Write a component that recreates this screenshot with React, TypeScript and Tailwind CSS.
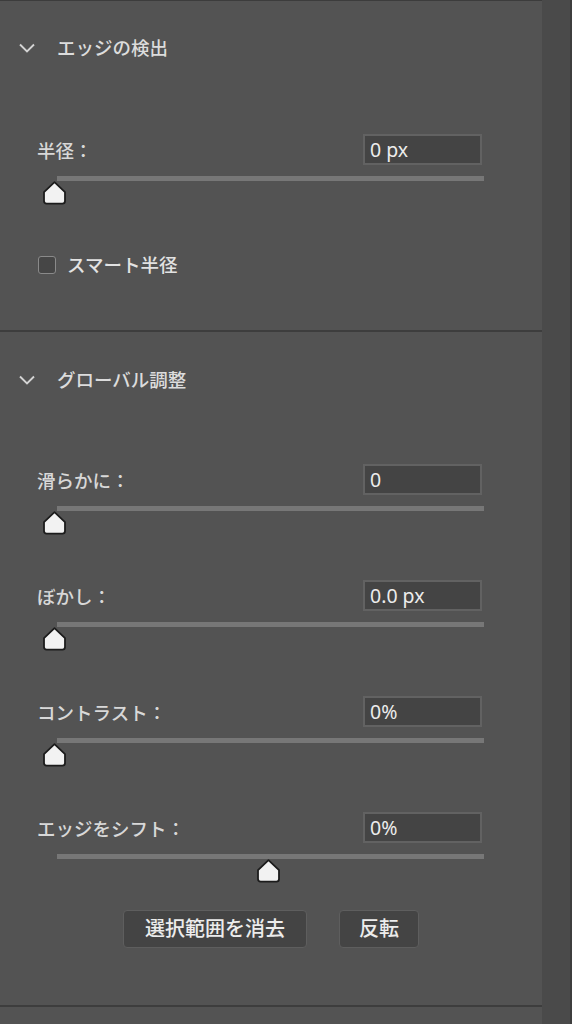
const FONT = 'font-["Noto_Sans","Noto_Sans_CJK_JP",sans-serif]';

function Thumb() {
  return (
    <svg width="25" height="24" viewBox="0 0 25 24" aria-hidden>
      <path
        d="M12.5 1.2 L23 11.2 V20 Q23 22.6 20.4 22.6 H4.6 Q2 22.6 2 20 V11.2 Z"
        fill="#f2f2f2"
        stroke="#1c1c1c"
        strokeWidth="1.8"
        strokeLinejoin="round"
      />
    </svg>
  );
}

function Chevron() {
  return (
    <svg width="16" height="10" viewBox="0 0 16 10" aria-hidden>
      <polyline points="1,1.5 8,8.5 15,1.5" fill="none" stroke="#d4d4d4" strokeWidth="1.9" />
    </svg>
  );
}

function SectionHeader({ title }: { title: string }) {
  return (
    <div className="flex h-9 items-center pl-[19px]">
      <Chevron />
      <span className="ml-[22px] text-[18.5px] font-medium text-[#dcdcdc]">{title}</span>
    </div>
  );
}

interface SliderRowProps {
  label: string;
  value: string;
  position: number;
}

function SliderRow({ label, value, position }: SliderRowProps) {
  return (
    <div>
      <div className="flex h-[31px] items-center justify-between pl-[37px] pr-[60px]">
        <span className="pt-[3px] text-[18.5px] font-medium text-[#d8d8d8]">{label}</span>
        <div className="flex h-[31px] w-[119px] items-center border-2 border-[#626262] bg-[#444444] pl-[5px] text-[19.5px] text-[#ececec]">
          {value}
        </div>
      </div>
      <div className="relative ml-[57px] mr-[58px] mt-[11px] h-[28px]">
        <div className="h-[5px] bg-[#777777]" />
        <div className="absolute top-[5px] -ml-[15px]" style={{ left: `${position}%` }}>
          <Thumb />
        </div>
      </div>
    </div>
  );
}

export default function App() {
  return (
    <div className={`flex h-[1024px] w-[572px] bg-[#535353] ${FONT}`}>
      <main className="flex w-[542px] flex-col border-t border-[#3c3c3c] bg-[#535353]">
        <section className="h-[329px] pt-[29px]">
          <SectionHeader title="エッジの検出" />
          <div className="mt-[68px]">
            <SliderRow label="半径：" value="0 px" position={0} />
          </div>
          <label className="mt-[47px] flex items-center pl-[38px]">
            <span className="h-[18px] w-[18px] rounded-[3px] border-[1.5px] border-[#8a8a8a] bg-[#464646]" />
            <span className="ml-[11px] text-[18.5px] font-medium text-[#e2e2e2]">スマート半径</span>
          </label>
        </section>

        <div className="h-[2px] bg-[#3d3d3d]" />

        <section className="h-[673px] pt-[30px]">
          <SectionHeader title="グローバル調整" />
          <div className="mt-[66px] flex flex-col gap-[46px]">
            <SliderRow label="滑らかに：" value="0" position={0} />
            <SliderRow label="ぼかし：" value="0.0 px" position={0} />
            <SliderRow label="コントラスト：" value="0%" position={0} />
            <SliderRow label="エッジをシフト：" value="0%" position={50} />
          </div>
          <div className="mt-[28px] flex justify-center gap-8">
            <button
              type="button"
              className="h-[38px] w-[184px] rounded-[4px] border border-[#5e5e5e] bg-[#444444] text-[20px] font-medium text-[#ececec]"
            >
              選択範囲を消去
            </button>
            <button
              type="button"
              className="h-[38px] w-[80px] rounded-[4px] border border-[#5e5e5e] bg-[#444444] text-[20px] font-medium text-[#ececec]"
            >
              反転
            </button>
          </div>
        </section>

        <div className="h-[2px] bg-[#3d3d3d]" />
        <div className="flex-1 bg-[#535353]" />
      </main>
      <aside className="w-[28px] bg-[#4a4a4a]" />
      <div className="w-[2px] bg-[#3e3e3e]" />
    </div>
  );
}
